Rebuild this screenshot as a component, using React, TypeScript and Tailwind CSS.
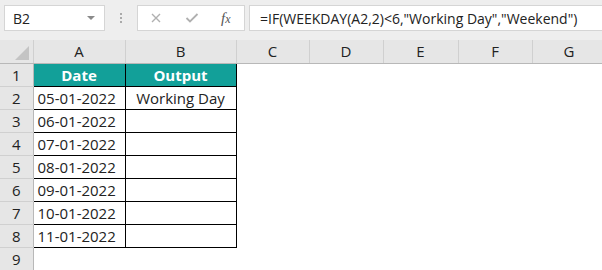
import { useState } from "react";

const dates = ["05-01-2022", "06-01-2022", "07-01-2022", "08-01-2022", "09-01-2022", "10-01-2022", "11-01-2022"];
const cols = ["C", "D", "E", "F", "G"];
const colW = ["w-[73px]", "w-[74px]", "w-[75px]", "w-[74px]", "w-[74px]"];

export default function App() {
  const [cell] = useState("B2");
  return (
    <div className="w-[602px] h-[270px] overflow-hidden bg-white text-[#222]" style={{ fontFamily: '"Open Sans", "Noto Sans", sans-serif' }}>
      {/* formula bar */}
      <div className="h-[40px] bg-[#eeeeee] flex items-start pt-[5px] pl-[4px]">
        <div className="w-[101px] h-[26px] bg-white border border-[#d5d5d5] flex items-center justify-between px-[8px]">
          <span className="text-[14px]">{cell}</span>
          <span className="w-0 h-0 border-l-[4px] border-r-[4px] border-t-[4px] border-l-transparent border-r-transparent border-t-[#8a8a8a] mr-[1px]" />
        </div>
        <div className="w-[32px] h-[26px] flex flex-col items-center justify-center gap-[2px]">
          <span className="w-[2px] h-[2px] bg-[#aaa]" />
          <span className="w-[2px] h-[2px] bg-[#aaa]" />
          <span className="w-[2px] h-[2px] bg-[#aaa]" />
        </div>
        <div className="w-[108px] h-[26px] bg-white border border-[#d5d5d5] flex items-center">
          <svg width="12" height="12" viewBox="0 0 12 12" className="ml-[12px]">
            <path d="M2 2L10 10M10 2L2 10" stroke="#b0b0b0" strokeWidth="1.4" />
          </svg>
          <svg width="14" height="12" viewBox="0 0 14 12" className="ml-[23px]">
            <path d="M1.5 6L5 9.5L12.5 2" stroke="#b0b0b0" strokeWidth="1.8" fill="none" />
          </svg>
          <span className="ml-[22px] text-[15px] italic text-[#555]" style={{ fontFamily: '"Liberation Serif", serif' }}>
            f<span className="text-[12px]">x</span>
          </span>
        </div>
        <div className="ml-[4px] flex-1 h-[26px] bg-white border border-[#d5d5d5] border-r-0 flex items-center pl-[10px]">
          <span className="text-[14px] whitespace-nowrap">=IF(WEEKDAY(A2,2)&lt;6,"Working Day","Weekend")</span>
        </div>
      </div>

      {/* sheet */}
      <table className="border-collapse table-fixed text-[15px] leading-[20px]" style={{ width: 606 }}>
        <thead>
          <tr className="h-[23px]">
            <th className="w-[33px] p-0 bg-[#e6e6e6] border-b border-b-[#b8b8b8] border-r border-r-[#d0d0d0] relative">
              <span className="absolute right-[4px] bottom-[3px] w-0 h-0 border-b-[14px] border-l-[14px] border-b-[#c4c4c4] border-l-transparent" />
            </th>
            <th className="w-[92px] p-0 font-normal bg-[#e6e6e6] border-b border-b-[#b8b8b8] border-r border-r-[#d0d0d0]">A</th>
            <th className="w-[111px] p-0 font-normal bg-[#e6e6e6] border-b border-b-[#b8b8b8] border-r border-r-[#d0d0d0]">B</th>
            {cols.map((c, i) => (
              <th key={c} className={`${colW[i]} p-0 font-normal bg-[#e6e6e6] border-b border-b-[#b8b8b8] border-r border-r-[#d0d0d0]`}>{c}</th>
            ))}
          </tr>
        </thead>
        <tbody>
          <tr className="h-[23px]">
            <td className="p-0 text-center bg-[#e6e6e6] border-b border-b-[#d0d0d0] border-r border-r-[#b8b8b8]">1</td>
            <td className="p-0 text-center bg-[#12a099] text-white font-bold border border-black">Date</td>
            <td className="p-0 text-center bg-[#12a099] text-white font-bold border border-black">Output</td>
            <td colSpan={5} className="p-0" />
          </tr>
          {dates.map((d, i) => (
            <tr key={d} className="h-[23px]">
              <td className="p-0 text-center bg-[#e6e6e6] border-b border-b-[#d0d0d0] border-r border-r-[#b8b8b8]">{i + 2}</td>
              <td className="p-0 pl-[4px] border border-black whitespace-nowrap">{d}</td>
              <td className="p-0 text-center border border-black whitespace-nowrap">{i === 0 ? "Working Day" : ""}</td>
              <td colSpan={5} className="p-0" />
            </tr>
          ))}
          <tr className="h-[23px]">
            <td className="p-0 text-center bg-[#e6e6e6] border-r border-r-[#b8b8b8]">9</td>
            <td colSpan={7} className="p-0" />
          </tr>
        </tbody>
      </table>
    </div>
  );
}
